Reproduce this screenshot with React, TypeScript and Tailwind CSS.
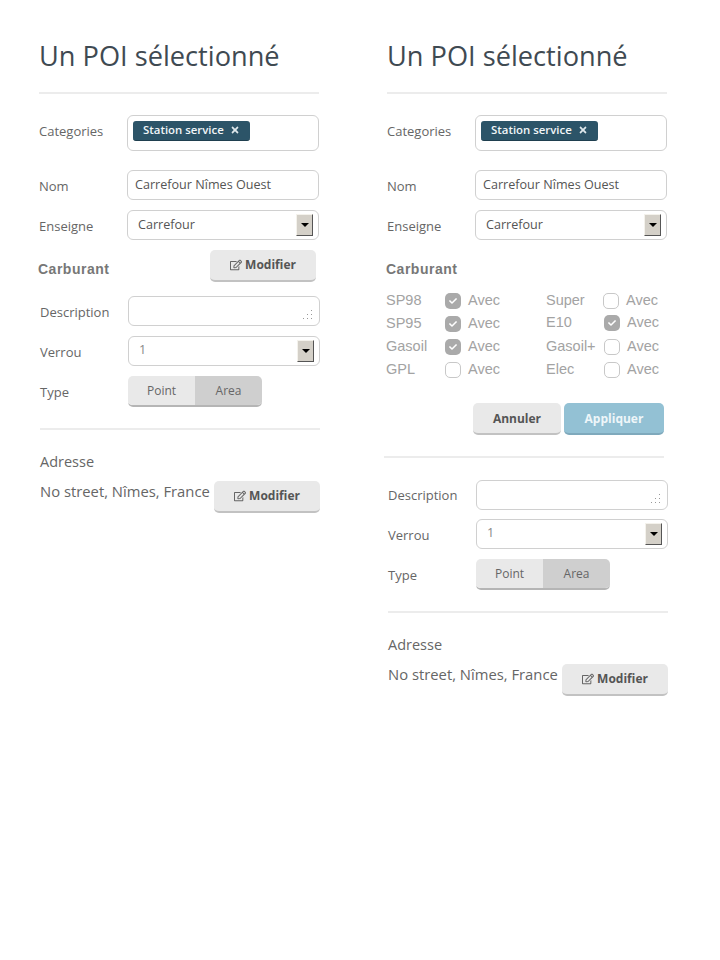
import React from 'react';
import { FaCheck, FaRegEdit, FaTimes } from 'react-icons/fa';

const Label = ({ children, className = '' }: { children: React.ReactNode; className?: string }) => (
  <span className={`w-[88px] shrink-0 text-[13px] text-[#666] ${className}`}>{children}</span>
);

const Field = ({ children, className = '' }: { children?: React.ReactNode; className?: string }) => (
  <div className={`relative flex h-[30px] w-[192px] items-center rounded-[6px] border border-[#d0d0d0] bg-white text-[12.6px] text-[#555] ${className}`}>
    {children}
  </div>
);

const SelectArrow = () => (
  <div className="absolute right-[5px] top-[3px] flex h-[22px] w-[17px] items-center justify-center border border-t-[#f4f2ec] border-l-[#f4f2ec] border-r-[#555] border-b-[#555] bg-[#d4d0c8]">
    <div className="h-0 w-0 border-x-[4px] border-t-[4px] border-x-transparent border-t-black" />
  </div>
);

const Modifier = ({ className = '' }: { className?: string }) => (
  <button className={`flex items-center justify-center gap-[3px] rounded-[5px] border-b-2 border-[#c2c2c2] bg-[#e9e9e9] text-[12px] font-bold text-[#555] ${className}`}>
    <FaRegEdit size={12} className="text-[#666]" />
    Modifier
  </button>
);

const Divider = ({ className = '' }: { className?: string }) => (
  <div className={`h-[2px] bg-[#ececec] ${className}`} />
);

const TopFields = () => (
  <>
    <h1 className="mt-[38px] h-[36px] text-[27.2px] font-normal leading-[36px] text-[#3f4a52]">Un POI sélectionné</h1>
    <Divider className="mt-[18px] w-[280px]" />
    <div className="mt-[21px] flex items-center">
      <Label className="-mt-[2px]">Categories</Label>
      <div className="h-[36px] w-[192px] rounded-[6px] border border-[#d0d0d0] bg-white pl-[5px] pt-[5px]">
        <div className="flex h-[20px] w-[117px] items-center gap-[6px] rounded-[3px] border-b border-[#1f3f4f] bg-[#2c5468] pb-px pl-[10px] text-[11.4px] font-semibold text-[#f2f6f8]">
          Station service
          <FaTimes size={10} className="text-[#dfe8ec]" />
        </div>
      </div>
    </div>
    <div className="mt-[19px] flex items-center">
      <Label className="mt-[4px]">Nom</Label>
      <Field className="pl-[7px]">Carrefour Nîmes Ouest</Field>
    </div>
    <div className="mt-[10px] flex items-center">
      <Label className="mt-[4px]">Enseigne</Label>
      <Field className="pl-[10px]">
        Carrefour
        <SelectArrow />
      </Field>
    </div>
  </>
);

const BottomFields = ({ tight = false }: { tight?: boolean }) => (
  <>
    <div className="flex items-center pl-px">
      <Label className={tight ? 'mt-[2px]' : 'mt-[4px]'}>Description</Label>
      <Field>
        <div className="absolute bottom-[6px] right-[7px] grid grid-cols-3 gap-[3px]">
          <span className="h-px w-px" />
          <span className="h-px w-px" />
          <span className="h-px w-px bg-[#999]" />
          <span className="h-px w-px" />
          <span className="h-px w-px bg-[#999]" />
          <span className="h-px w-px bg-[#999]" />
          <span className="h-px w-px bg-[#999]" />
          <span className="h-px w-px bg-[#999]" />
          <span className="h-px w-px bg-[#999]" />
        </div>
      </Field>
    </div>
    <div className={`flex items-center pl-px ${tight ? 'mt-[9px]' : 'mt-[10px]'}`}>
      <Label className="mt-[4px]">Verrou</Label>
      <Field className="pl-[10px] pb-[2px] text-[#888]">
        1
        <SelectArrow />
      </Field>
    </div>
    <div className="mt-[10px] flex items-center pl-px">
      <Label className="mt-[2px]">Type</Label>
      <div className="flex h-[31px] w-[134px] overflow-hidden rounded-[5px] border-b-2 border-[#b5b5b5] text-[12px] text-[#666]">
        <div className="flex w-[67px] items-center justify-center bg-[#e9e9e9]">Point</div>
        <div className="flex w-[67px] items-center justify-center bg-[#cfcfcf]">Area</div>
      </div>
    </div>
    <Divider className="ml-px mt-[21px] w-[280px]" />
    <div className="ml-px mt-[22px] text-[14.5px] leading-[20px] text-[#666]">Adresse</div>
    <div className="ml-px mt-[9px] flex items-start">
      <span className="w-[174px] text-[14.8px] leading-[20px] text-[#666]">No street, Nîmes, France</span>
      <Modifier className="h-[32px] w-[106px]" />
    </div>
  </>
);

const Fuel = ({ name, on, w = 'w-[59px]', className = '' }: { name: string; on?: boolean; w?: string; className?: string }) => (
  <div className={`flex h-[23px] items-center font-['Liberation_Sans',sans-serif] text-[14.5px] text-[#a3a3a3] ${className}`}>
    <span className={w}>{name}</span>
    {on ? (
      <span className="flex h-[16px] w-[16px] items-center justify-center rounded-[5px] bg-[#aaaaaa]">
        <FaCheck size={8} className="text-white" />
      </span>
    ) : (
      <span className="h-[16px] w-[16px] rounded-[5px] border border-[#c8c8c8] bg-white" />
    )}
    <span className="ml-[7px]">Avec</span>
  </div>
);

const App: React.FC = () => {
  return (
    <div className="flex h-[960px] w-[720px] items-start bg-white font-['Open_Sans',sans-serif]">
      <div className="ml-[39px] w-[281px]">
        <TopFields />
        <div className="mt-[10px] flex h-[32px] items-center justify-between">
          <span className="-ml-px mt-[6px] font-['Liberation_Sans',sans-serif] text-[14px] font-bold tracking-[0.5px] text-[#777]">Carburant</span>
          <Modifier className="mr-[4px] h-[32px] w-[106px]" />
        </div>
        <div className="mt-[14px]">
          <BottomFields />
        </div>
      </div>

      <div className="ml-[67px] w-[281px]">
        <TopFields />
        <div className="-ml-px mt-[20px] font-['Liberation_Sans',sans-serif] text-[14px] font-bold leading-[18px] tracking-[0.5px] text-[#777]">Carburant</div>
        <div className="-ml-px mt-[11px] flex">
          <div className="w-[160px]">
            <Fuel name="SP98" on />
            <Fuel name="SP95" on />
            <Fuel name="Gasoil" on />
            <Fuel name="GPL" />
          </div>
          <div>
            <Fuel name="Super" w="w-[57px]" />
            <Fuel name="E10" on w="w-[58px]" className="-mt-px mb-px" />
            <Fuel name="Gasoil+" w="w-[58px]" />
            <Fuel name="Elec" w="w-[58px]" />
          </div>
        </div>
        <div className="mt-[22px] flex w-[277px] justify-end gap-[3px]">
          <button className="h-[32px] w-[88px] rounded-[5px] border-b-2 border-[#c2c2c2] bg-[#e9e9e9] pt-px text-[12px] font-bold text-[#555]">Annuler</button>
          <button className="h-[32px] w-[100px] rounded-[5px] border-b-2 border-[#7fa9bc] bg-[#93c1d4] pt-px text-[12px] font-bold text-[#eef6f9]">Appliquer</button>
        </div>
        <Divider className="-ml-[3px] mt-[21px] w-[280px]" />
        <div className="mt-[22px]">
          <BottomFields tight />
        </div>
      </div>
    </div>
  );
};

export default App;
